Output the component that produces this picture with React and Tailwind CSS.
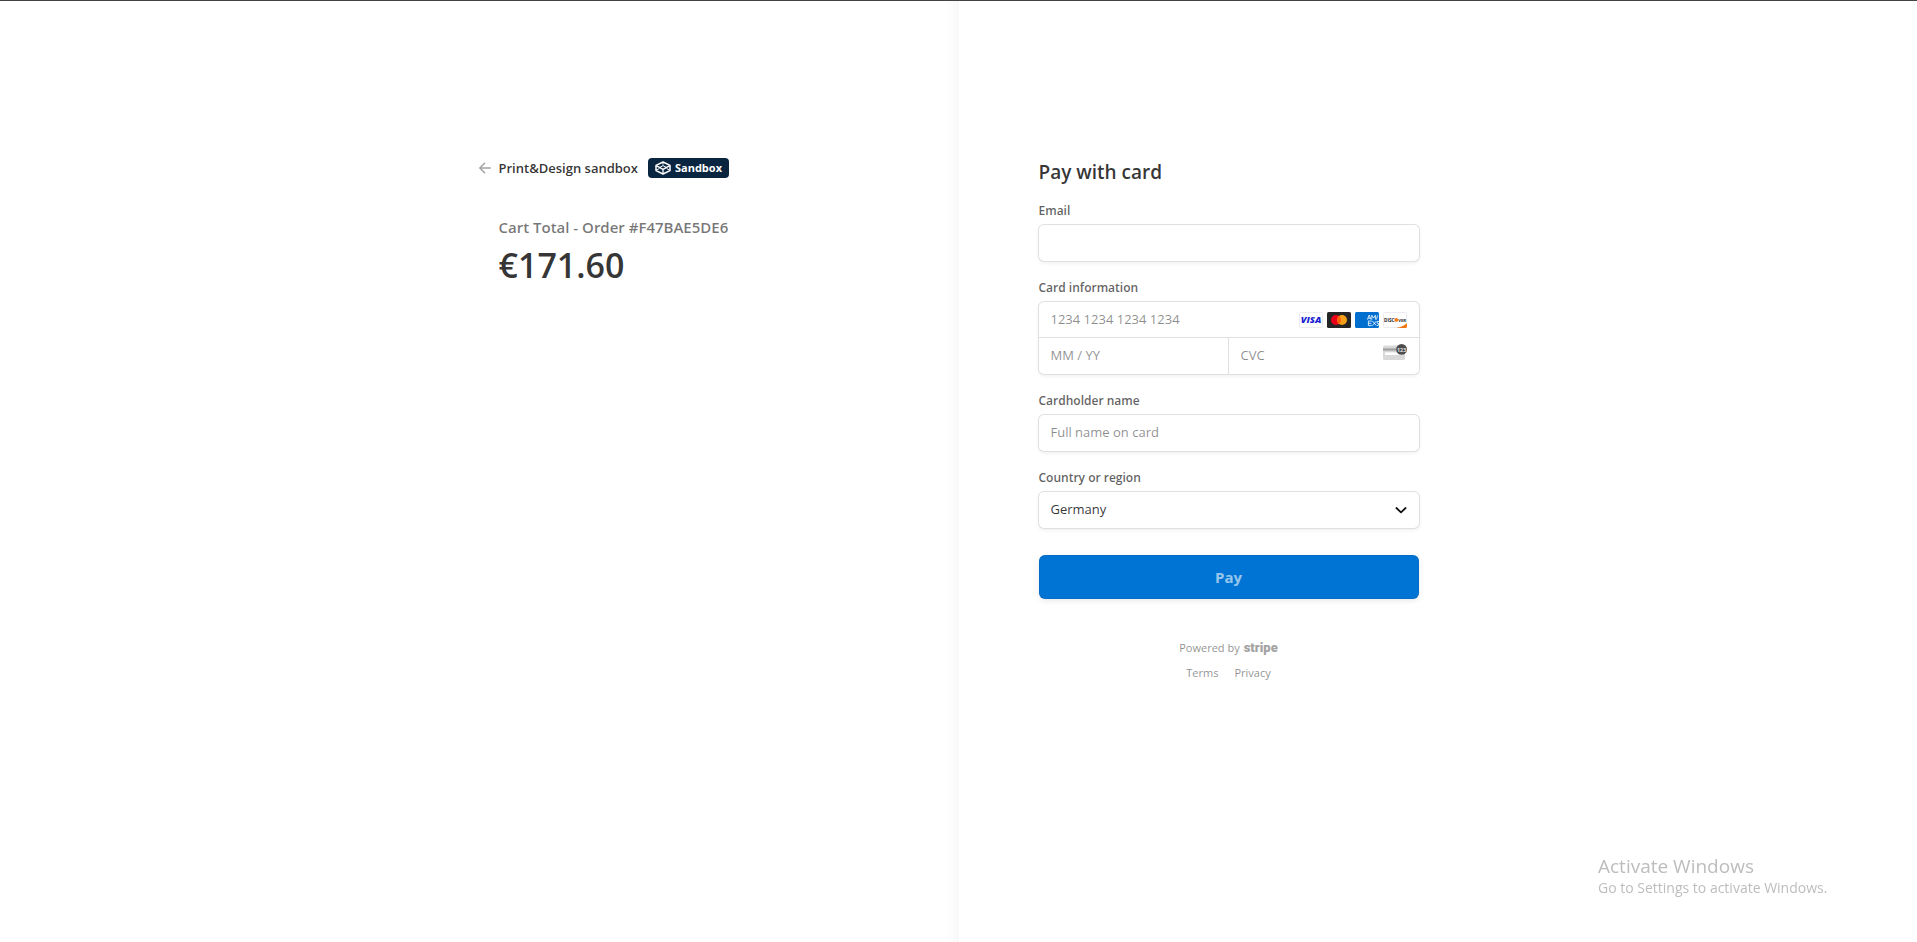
const fieldBox =
  'mt-1.5 w-full rounded-[5px] bg-white shadow-[0_0_0_1px_#e0e0e0,0_2px_4px_rgba(0,0,0,0.07)]';
const labelText = 'block text-xs font-semibold leading-4 text-[#1a1a1a]/70';
const inputText =
  'min-w-0 flex-1 bg-transparent px-3 text-[13px] text-[#1a1a1a]/90 outline-none placeholder:text-[#1a1a1a]/50';

function BackArrow() {
  return (
    <svg width="12" height="12" viewBox="0 0 12 12" fill="none" stroke="#a3a3a3" strokeWidth="1.5" strokeLinecap="round" strokeLinejoin="round" aria-hidden="true">
      <path d="M11.2 6H1M5.6 1.2L0.8 6L5.6 10.8" />
    </svg>
  );
}

function SandboxIcon() {
  return (
    <svg width="16" height="14" viewBox="0 0 16 14" fill="none" stroke="#fff" strokeWidth="1.5" strokeLinejoin="round" aria-hidden="true">
      <path d="M8 1L15 4.4V9.6L8 13L1 9.6V4.4Z" />
      <path d="M1.2 4.6L8 8.4L14.8 4.6M8 8.4V13" strokeWidth="1.3" />
      <path d="M8 1.2V3.6M1.2 9.4L4.4 7.4M14.8 9.4L11.6 7.4M4.8 6.4L8 4.6L11.2 6.4" strokeWidth="1" />
    </svg>
  );
}

function Visa() {
  return (
    <svg width="24" height="16" viewBox="0 0 24 16" role="img" aria-label="Visa">
      <rect x="0.5" y="0.5" width="23" height="15" rx="1" fill="#fff" stroke="#ececf0" />
      <text x="12" y="11.4" textAnchor="middle" fontFamily="Open Sans, sans-serif" fontSize="9.4" fontWeight="800" fontStyle="italic" fill="#1a1fd0">VISA</text>
    </svg>
  );
}

function Mastercard() {
  return (
    <svg width="24" height="16" viewBox="0 0 24 16" role="img" aria-label="Mastercard">
      <rect width="24" height="16" rx="1.5" fill="#252525" />
      <circle cx="9" cy="8" r="5" fill="#eb001b" />
      <circle cx="15" cy="8" r="5" fill="#f79e1b" />
      <path d="M12 4a5 5 0 0 1 0 8a5 5 0 0 1 0-8Z" fill="#ff5f00" />
    </svg>
  );
}

function Amex() {
  return (
    <svg width="24" height="16" viewBox="0 0 24 16" role="img" aria-label="American Express">
      <rect width="24" height="16" rx="1.5" fill="#016fd0" />
      <g fill="none" stroke="#fff" strokeWidth="0.9" strokeOpacity="0.9">
        <path d="M12.4 7.6L14.2 3L16 7.6M13 6.2H15.4M16.8 7.6V3.2L18.6 6L20.4 3.2V7.6M21.4 7.6L22.6 3.4" />
        <path d="M16.8 9H13.4V13.6H16.8M13.4 11.3H16.4M17.4 9L21.4 13.6M21.4 9L17.4 13.6M24 9.4H22.2V11.3H23.6V13.4H22" />
      </g>
    </svg>
  );
}

function Discover() {
  return (
    <svg width="24" height="16" viewBox="0 0 24 16" role="img" aria-label="Discover">
      <rect x="0.5" y="0.5" width="23" height="15" rx="1" fill="#fff" stroke="#ececf0" />
      <path d="M24 11.2V14.5A1.5 1.5 0 0 1 22.5 16H13C17.5 15.2 21.5 13.4 24 11.2Z" fill="#f27712" />
      <text x="1" y="9.6" fontFamily="Open Sans, sans-serif" fontSize="4.6" fontWeight="700" fill="#2b2b2b">DISC</text>
      <circle cx="13.2" cy="7.9" r="1.9" fill="#f27712" />
      <text x="15.2" y="9.6" fontFamily="Open Sans, sans-serif" fontSize="4.2" fontWeight="700" fill="#2b2b2b">VER</text>
    </svg>
  );
}

function CvcCard() {
  return (
    <svg className="mt-[6px] shrink-0 self-start" width="24" height="16" viewBox="0 0 24 16" aria-hidden="true">
      <defs>
        <linearGradient id="stripe-fade" x1="0" y1="0" x2="0" y2="1">
          <stop offset="0" stopColor="#d9d9d9" />
          <stop offset="0.5" stopColor="#9c9c9c" />
          <stop offset="1" stopColor="#d0d0d0" />
        </linearGradient>
      </defs>
      <rect y="1.5" width="22" height="14.5" rx="1.5" fill="#d9d9d9" />
      <rect y="3.4" width="22" height="4" fill="url(#stripe-fade)" />
      <rect x="2" y="8.4" width="18" height="2.6" fill="#fff" />
      <circle cx="18.6" cy="5.4" r="5.4" fill="#4d4d4d" />
      <text x="18.6" y="7.5" textAnchor="middle" fontFamily="Open Sans, sans-serif" fontSize="5.4" fontWeight="700" fill="#e0e0e0">123</text>
    </svg>
  );
}

function Chevron() {
  return (
    <svg className="pointer-events-none absolute right-3 top-3" width="12" height="12" viewBox="0 0 12 12" fill="none" stroke="#111" strokeWidth="1.8" strokeLinecap="round" strokeLinejoin="round" aria-hidden="true">
      <path d="M1.4 4L6 8.4L10.6 4" />
    </svg>
  );
}

function OrderSummary() {
  return (
    <section className="flex justify-end bg-white pr-20 pt-[156px] shadow-[inset_-16px_0_16px_-14px_rgba(0,0,0,0.05)]">
      <div className="w-full max-w-[380px]">
        <header className="-ml-5 flex h-[22px] items-center gap-2">
          <a href="#back" aria-label="Back" className="block"><BackArrow /></a>
          <div className="flex items-center gap-2.5">
            <span className="text-[13px] font-semibold leading-5 text-[#1a1a1a]/90">Print&amp;Design sandbox</span>
            <span className="flex h-5 items-center gap-1 rounded bg-[#0a2540] px-[7px] text-[11px] font-bold leading-4 text-white">
              <SandboxIcon />
              Sandbox
            </span>
          </div>
        </header>
        <p className="mt-9 text-[15px] font-semibold leading-6 text-[#1a1a1a]/60">Cart Total - Order #F47BAE5DE6</p>
        <p className="mt-1 text-[34px] font-semibold leading-[44px] text-[#1a1a1a]/90">€171.60</p>
      </div>
    </section>
  );
}

function PaymentForm() {
  return (
    <section className="bg-white pl-20 pt-[156px]">
      <div className="w-full max-w-[380px]">
        <form onSubmit={(e) => e.preventDefault()}>
          <h1 className="text-[19px] font-semibold leading-[30px] text-[#1a1a1a]/90">Pay with card</h1>

          <div className="mt-4">
            <label htmlFor="email" className={labelText}>Email</label>
            <div className={`${fieldBox} flex h-9`}>
              <input id="email" type="email" className={inputText} />
            </div>
          </div>

          <fieldset className="mt-[19px]">
            <legend className={labelText}>Card information</legend>
            <div className={fieldBox}>
              <div className="flex h-[35px] items-center pr-3">
                <input aria-label="Card number" placeholder="1234 1234 1234 1234" className={inputText} />
                <span className="flex gap-1"><Visa /><Mastercard /><Amex /><Discover /></span>
              </div>
              <div className="grid h-[37px] grid-cols-2 border-t border-[#e0e0e0]">
                <div className="flex border-r border-[#e0e0e0]">
                  <input aria-label="Expiration" placeholder="MM / YY" className={inputText} />
                </div>
                <div className="flex items-center pr-3">
                  <input aria-label="CVC" placeholder="CVC" className={inputText} />
                  <CvcCard />
                </div>
              </div>
            </div>
          </fieldset>

          <div className="mt-[19px]">
            <label htmlFor="name" className={labelText}>Cardholder name</label>
            <div className={`${fieldBox} flex h-9`}>
              <input id="name" placeholder="Full name on card" className={inputText} />
            </div>
          </div>

          <div className="mt-[19px]">
            <label htmlFor="country" className={labelText}>Country or region</label>
            <div className={`${fieldBox} relative flex h-9`}>
              <select id="country" defaultValue="Germany" className="w-full appearance-none bg-transparent px-3 text-[13px] text-[#1a1a1a]/90 outline-none">
                <option>Germany</option>
              </select>
              <Chevron />
            </div>
          </div>

          <button type="submit" className="mt-[27px] h-11 w-full rounded-md bg-[#0074d4] text-[15px] font-bold text-white/60 shadow-[inset_0_0_0_1px_rgba(50,50,93,0.1),0_2px_5px_rgba(50,50,93,0.1)]">
            Pay
          </button>
        </form>

        <footer className="mt-[41px] text-center text-[11px] leading-4 text-[#1a1a1a]/50">
          <a href="#stripe" className="inline-flex items-center gap-1">
            Powered by <span className="font-[Roboto] text-[13px] font-black leading-4 text-[#a3a3a3]">stripe</span>
          </a>
          <div className="mt-[9px] flex justify-center gap-4">
            <a href="#terms">Terms</a>
            <a href="#privacy">Privacy</a>
          </div>
        </footer>
      </div>
    </section>
  );
}

export default function App() {
  return (
    <main className="grid min-h-screen grid-cols-2 border-t border-[#444] bg-white font-['Open_Sans',sans-serif]">
      <OrderSummary />
      <PaymentForm />
      <aside className="pointer-events-none fixed bottom-11 right-[83px] w-[236px] text-[#bdbdbd]">
        <p className="text-[19px] leading-6">Activate Windows</p>
        <p className="text-sm leading-5">Go to Settings to activate Windows.</p>
      </aside>
    </main>
  );
}
